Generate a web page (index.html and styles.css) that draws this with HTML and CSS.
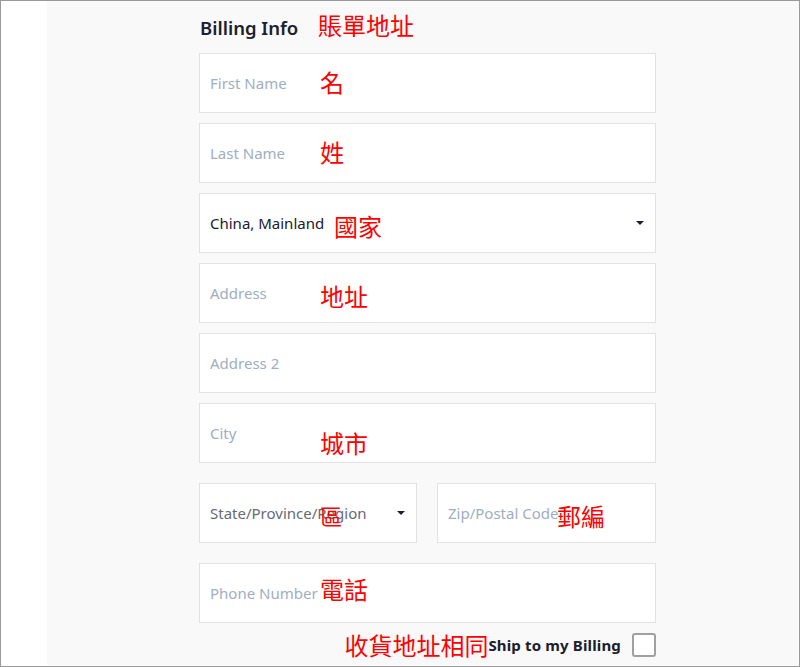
FILE: index.html
```html
<!DOCTYPE html>
<html lang="zh-Hant">
<head>
  <meta charset="UTF-8" />
  <meta name="viewport" content="width=device-width, initial-scale=1.0" />
  <title>Billing Info</title>
  <link rel="stylesheet" href="styles.css">
</head>
<body>
  <div class="frame">
    <div class="gutter"></div>
    <div class="main">
      <form class="billing">
        <h3 class="title">Billing Info <span class="note note-title">賬單地址</span></h3>

        <div class="field">
          <input type="text" placeholder="First Name" />
          <span class="note" style="left:121px">名</span>
        </div>
        <div class="field">
          <input type="text" placeholder="Last Name" />
          <span class="note" style="left:121px">姓</span>
        </div>
        <div class="field select-field">
          <select>
            <option>China, Mainland</option>
          </select>
          <span class="caret"></span>
          <span class="note note-low" style="left:135px">國家</span>
        </div>
        <div class="field">
          <input type="text" placeholder="Address" />
          <span class="note note-low" style="left:121px">地址</span>
        </div>
        <div class="field">
          <input type="text" placeholder="Address 2" />
        </div>
        <div class="field">
          <input type="text" placeholder="City" />
          <span class="note note-low2" style="left:121px">城市</span>
        </div>

        <div class="row">
          <div class="field select-field muted state">
            <select>
              <option>State/Province/Region</option>
            </select>
            <span class="caret"></span>
            <span class="note note-small" style="left:121px">區</span>
          </div>
          <div class="field zip">
            <input type="text" placeholder="Zip/Postal Code" />
            <span class="note note-low" style="left:120px">郵編</span>
          </div>
        </div>

        <div class="field phone">
          <input type="text" placeholder="Phone Number" />
          <span class="note note-high" style="left:121px">電話</span>
        </div>

        <label class="ship">
          <span class="note-inline">收貨地址相同</span>
          <span class="ship-text">Ship to my Billing</span>
          <input type="checkbox" class="check" />
        </label>
      </form>
    </div>
  </div>
</body>
</html>
```

FILE: styles.css
```css
body {
  margin: 0;
  font-family: 'Noto Sans', 'Open Sans', sans-serif;
  color: #1a202c;
}
.frame {
  width: 800px;
  height: 667px;
  box-sizing: border-box;
  border: 1px solid #9a9a9a;
  display: flex;
  background: #fff;
  overflow: hidden;
}
.gutter {
  width: 46px;
}
.main {
  flex: 1;
  background: #f9f9f9;
  padding-left: 152px;
  margin-bottom: 1px;
}
.billing {
  width: 457px;
}
.title {
  margin: 0;
  height: 52px;
  padding-top: 14px;
  box-sizing: border-box;
  font-size: 18.5px;
  font-weight: 600;
  position: relative;
  padding-left: 1px;
}
.note {
  position: absolute;
  top: 17px;
  color: #ff0000;
  font-family: "Noto Sans CJK TC", sans-serif;
  font-size: 24px;
  font-weight: 400;
  line-height: 1;
  white-space: nowrap;
}
.note-title {
  left: 119px;
  top: 12px;
}
.note-low {
  top: 21px;
}
.note-low2 {
  top: 28px;
}
.note-high {
  top: 14px;
}
.note-small {
  font-size: 22px;
  top: 21px;
}
.field {
  position: relative;
  height: 60px;
  margin-bottom: 10px;
}
.field input,
.field select {
  width: 100%;
  height: 100%;
  box-sizing: border-box;
  border: 1px solid #e2e2e2;
  background: #fff;
  padding: 0 10px;
  font-family: inherit;
  font-size: 15px;
  color: #1a202c;
  outline: none;
  border-radius: 0;
}
.field input::placeholder {
  color: #a0aec0;
}
.field select {
  appearance: none;
  -webkit-appearance: none;
}
.muted select {
  color: #666b73;
}
.caret {
  position: absolute;
  right: 12px;
  top: 28px;
  width: 0;
  height: 0;
  border-left: 4px solid transparent;
  border-right: 4px solid transparent;
  border-top: 4px solid #1a202c;
}
.row {
  display: flex;
  gap: 20px;
  margin-top: 20px;
  margin-bottom: 10px;
}
.row .state {
  width: 218px;
}
.row .zip {
  flex: 1;
}
.phone {
  margin-bottom: 10px;
}
.ship {
  display: flex;
  justify-content: flex-end;
  align-items: center;
  height: 24px;
}
.note-inline {
  color: #ff0000;
  font-family: "Noto Sans CJK TC", sans-serif;
  font-size: 24px;
  line-height: 1;
}
.ship-text {
  font-size: 15px;
  font-weight: 700;
  letter-spacing: 0.15px;
  margin-right: 11px;
}
.check {
  appearance: none;
  -webkit-appearance: none;
  margin: 0;
  width: 24px;
  height: 24px;
  box-sizing: border-box;
  border: 2px solid #a0a0a0;
  border-radius: 3px;
  background: #fff;
}
```
